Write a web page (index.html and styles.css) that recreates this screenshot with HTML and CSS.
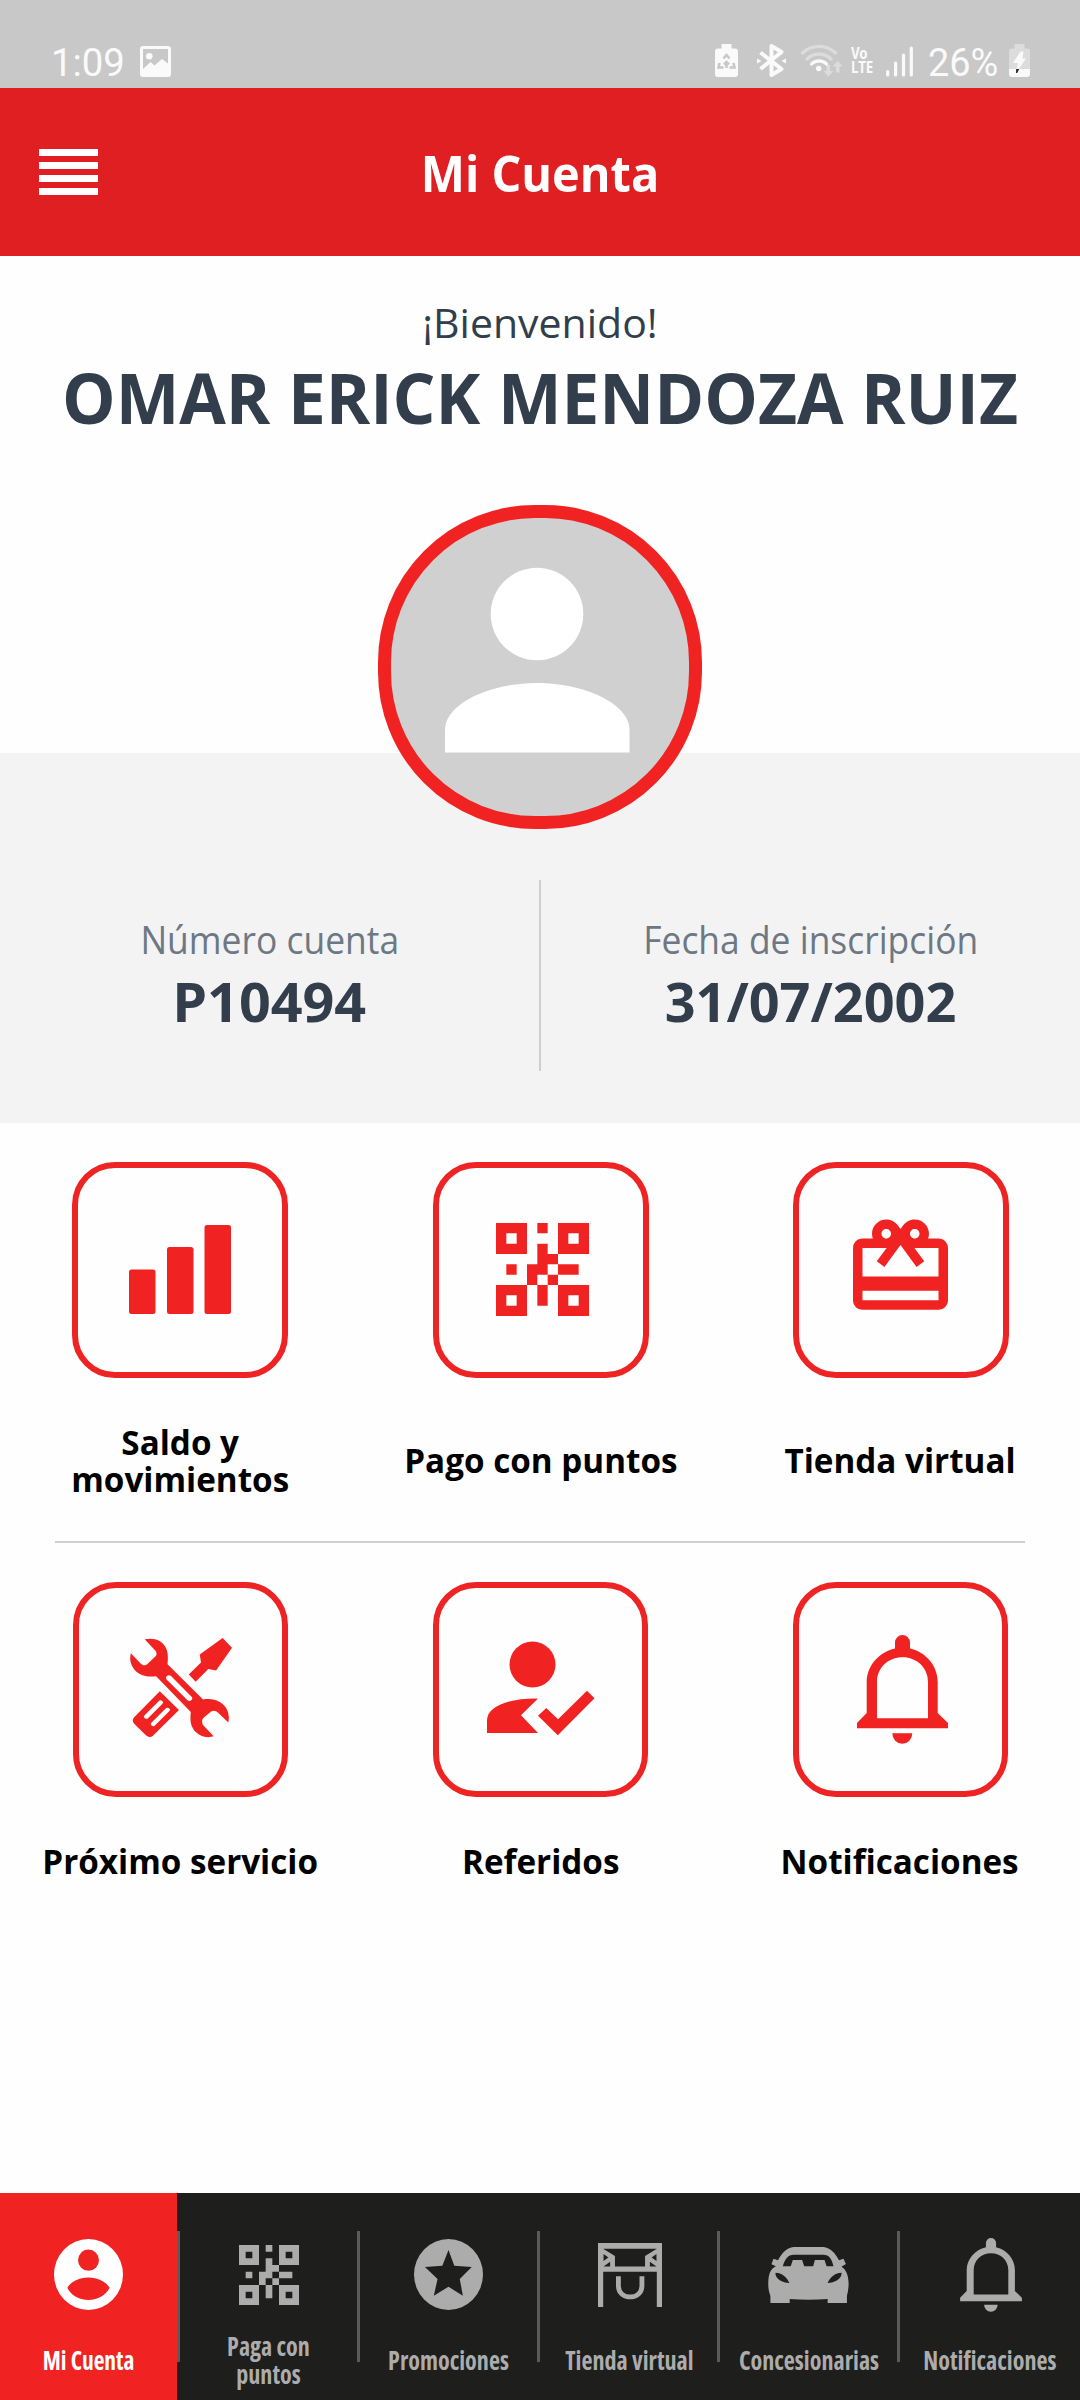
FILE: index.html
```html
<!DOCTYPE html>
<html lang="es">
<head>
<meta charset="utf-8">
<title>Mi Cuenta</title>
<link rel="stylesheet" href="styles.css">
</head>
<body>
<svg class="defs" aria-hidden="true">
  <symbol id="qr" viewBox="0 0 9 9" preserveAspectRatio="none">
    <path fill-rule="evenodd" d="M0 0h3v3H0zM1 1v1h1V1zM6 0h3v3H6zM7 1v1h1V1zM0 6h3v3H0zM1 7v1h1V7zM6 6h3v3H6zM7 7v1h1V7zM4 0h1v1H4zM4 2h1v1h1v1H5v1H4v1H3V4h1zM1 4h1v1H1zM6 4h2v1H6zM5 5h1v1H5zM4 6h1v2H4z"/>
  </symbol>
  <symbol id="bell" viewBox="0 0 91 109">
    <path fill-rule="evenodd" d="M38 13.5V7.5a7.5 7.5 0 0 1 15 0v6C69 17 80.7 31 80.7 47v31L91 88v5.3H0V88l9.7-10V47C9.7 31 22 17 38 13.5ZM45.5 22.3C31 22.3 20 33 20 47v36.3h51V47C71 33 60 22.3 45.5 22.3ZM35.3 98.3h20a10 10.5 0 0 1-20 0Z"/>
  </symbol>
</svg>

<div class="status">
  <span class="clock">1:09</span>
  <svg class="st-image" viewBox="0 0 31 31"><path fill-rule="evenodd" d="M3 0h25q3 0 3 3v25q0 3-3 3H3q-3 0-3-3V3q0-3 3-3zM3 3v20l7.500-7 4 3.500 7.500-6.500 6 4.500V3zM9.300 7a3.300 3.300 0 1 1 0 6.600 3.300 3.300 0 0 1 0-6.600z"/></svg>
  <div class="status-right">
    <svg class="st-recycle" viewBox="0 0 23 33"><path d="M6.500 0h10v4.500H20q3 0 3 3V30q0 3-3 3H3q-3 0-3-3V7.500q0-3 3-3h3.500z"/><path class="cut" d="M8.500 14.500l3-3.500 3 3.500M4.500 19l-1 4.500h5M18.500 19l1 4.500h-5M11.500 24v-5M9 20.500l2.500-2.500 2.500 2.500"/></svg>
    <svg class="st-bluetooth" viewBox="0 0 29 33"><path class="line" d="M3.500 8.500 24.500 25 14.500 31V2l10 6L3.500 25"/><path d="M0 14.500v5l4.500-2.500zM29 14.500v5L24.500 17z"/></svg>
    <svg class="st-wifi" viewBox="0 0 42 33"><path class="line faint" d="M1.500 9a24 24 0 0 1 33 0M6 15a17 17 0 0 1 24 0"/><path class="line" d="M10.500 20a10.500 10.500 0 0 1 15 0"/><circle cx="17.700" cy="24.500" r="2.700"/><path class="faint-fill" d="M25.500 21h3.500v6h3.500L27.300 32.500 22.500 27h3zM35 28.500v-6h-3.500L36.700 17l5 5.500h-3.200v6z"/></svg>
    <span class="volte"><span>Vo</span><span>LTE</span></span>
    <svg class="st-signal" viewBox="0 0 27 31"><path class="line" d="M1.700 25.500V29M9.600 17v12M17.500 9v20M25.300 2v27"/></svg>
    <span class="percent">26%</span>
    <svg class="st-battery" viewBox="0 0 21 33"><path class="faint-fill" d="M5.500 0h10v4.500H18q3 0 3 3V25H0V7.500q0-3 3-3h2.500z"/><path d="M0 25h21v5q0 3-3 3H3q-3 0-3-3z"/><path d="M11.500 7.500h3l-1 7h3.500L9 26l-1.500-1 1.500-6H4z"/><path class="bolt-tip" d="M7.200 25h3l-2 4H7z"/></svg>
  </div>
</div>

<header class="header">
  <svg class="menu" viewBox="0 0 59 46"><path d="M0 0h59v7H0zM0 13h59v7H0zM0 26h59v7H0zM0 39h59v7H0z"/></svg>
  <h1 class="title">Mi Cuenta</h1>
</header>

<section class="welcome">
  <p class="hello">¡Bienvenido!</p>
  <p class="name">OMAR ERICK MENDOZA RUIZ</p>
</section>

<section class="account">
  <div class="avatar"><svg viewBox="0 0 298 298"><circle cx="146" cy="96" r="46.300"/><path d="M54 234.500V212C54 185 100 165 146 165s92.500 20 92.500 47v22.500z"/></svg></div>
  <div class="fact">
    <span class="fact-label">Número cuenta</span>
    <span class="fact-value number">P10494</span>
  </div>
  <div class="fact">
    <span class="fact-label">Fecha de inscripción</span>
    <span class="fact-value">31/07/2002</span>
  </div>
</section>

<main class="menu-grid">
  <div class="row">
    <div class="tile">
      <div class="card"><svg class="i-bars" viewBox="0 0 102 89"><rect y="44.500" width="26.500" height="44.500" rx="2.500"/><rect x="38" y="22" width="26.500" height="67" rx="2.500"/><rect x="75.500" width="26.500" height="89" rx="2.500"/></svg></div>
      <p class="label">Saldo y<br>movimientos</p>
    </div>
    <div class="tile">
      <div class="card"><svg class="i-qr"><use href="#qr"/></svg></div>
      <p class="label">Pago con puntos</p>
    </div>
    <div class="tile">
      <div class="card"><svg class="i-gift" viewBox="2 2 20 19"><path d="M20 6h-2.180c.11-.31.18-.65.18-1 0-1.660-1.340-3-3-3-1.050 0-1.960.54-2.500 1.350l-.5.67-.5-.68C10.960 2.540 10.050 2 9 2 7.340 2 6 3.340 6 5c0 .35.07.69.18 1H4c-1.110 0-1.990.89-1.990 2L2 19c0 1.110.89 2 2 2h16c1.110 0 2-.89 2-2V8c0-1.110-.89-2-2-2zm-5-2c.55 0 1 .45 1 1s-.45 1-1 1-1-.45-1-1 .45-1 1-1zM9 4c.55 0 1 .45 1 1s-.45 1-1 1-1-.45-1-1 .45-1 1-1zm11 15H4v-2h16v2zm0-5H4V8h5.080L7 10.830 8.620 12 11 8.760l1-1.360 1 1.360L15.380 12 17 10.830 14.920 8H20v6z"/></svg></div>
      <p class="label">Tienda virtual</p>
    </div>
  </div>
  <div class="row second">
    <div class="tile">
      <div class="card"><svg class="i-tools" viewBox="245 326 250 301" preserveAspectRatio="none"><path fill-rule="evenodd" d="M281 330C300 324 325 330 334 358 339 374 338 390 337 405L424 511C450 505 475 518 484 545 488 558 488 570 486 580L461 551C456 545 450 543 444 547L426 565C421 571 420 578 424 588L450 622C430 630 405 618 396 590 392 575 393 562 394 549L309 441C285 445 262 438 250 410 244 395 245 385 247 372L271 403C277 411 285 409 289 403L307 382C311 378 311 371 308 365ZM334 450L386 513C392 519 400 512 397 504L345 440C339 434 331 442 334 450Z"/><path d="M472 326 495 355 456 424 437 419 406 458 389 436 419 400 416 376Z"/><path d="M318 486 365 543 303 618C297 626 290 626 284 619L257 586C250 577 250 570 257 562Z"/><path class="slot" d="M285 563 320 520M302 585 337 542"/></svg></div>
      <p class="label">Próximo servicio</p>
    </div>
    <div class="tile">
      <div class="card"><svg class="i-referral" viewBox="487 1641 108 95"><circle cx="532.500" cy="1664.500" r="23"/><path d="M487 1733v-12.500C487 1706 510 1698 538 1698.500L521 1715.300 538 1733zM546.300 1708 558 1719.300 587 1690.700 594.500 1698.300 557.800 1735.300 538 1715.700z"/></svg></div>
      <p class="label">Referidos</p>
    </div>
    <div class="tile">
      <div class="card"><svg class="i-bell"><use href="#bell"/></svg></div>
      <p class="label">Notificaciones</p>
    </div>
  </div>
</main>

<nav class="tabs">
  <a class="tab active">
    <span class="tab-icon"><svg class="t-round" viewBox="157 180 201 208" preserveAspectRatio="none"><path fill-rule="evenodd" d="M257.500 180a100.500 104 0 1 1 0 208 100.500 104 0 1 1 0-208zM257.500 211a30.500 31 0 1 0 0 62 30.500 31 0 1 0 0-62zM196 323C204 343 230 359 257.500 359 284 359 310 343 319 323 310 306 284 293 257.500 293 230 293 204 306 196 323z"/></svg></span>
    <span class="tab-label">Mi Cuenta</span>
  </a>
  <a class="tab">
    <span class="tab-icon"><svg class="t-qr"><use href="#qr"/></svg></span>
    <span class="tab-label">Paga con<br>puntos</span>
  </a>
  <a class="tab">
    <span class="tab-icon"><svg class="t-round" viewBox="1199 180 202 208" preserveAspectRatio="none"><path fill-rule="evenodd" d="M1300 180a101 104 0 1 1 0 208 101 104 0 1 1 0-208zM1300 212 1282 258 1231 262 1268 297 1257 346 1300 320 1342 346 1333 297 1368 262 1317 258z"/></svg></span>
    <span class="tab-label">Promociones</span>
  </a>
  <a class="tab">
    <span class="tab-icon"><svg class="t-store" viewBox="166 190 185 191" preserveAspectRatio="none"><path fill-rule="evenodd" d="M166 190H351V381H336V276H181V381H166ZM181 207 215 229V260H302V229L336 207ZM182 223V244L196 233ZM201 246V260H182ZM335 223V244L321 233ZM316 246V260H335Z"/><path class="arc" d="M225 289V318C225 362 293 362 293 318V289"/></svg></span>
    <span class="tab-label">Tienda virtual</span>
  </a>
  <a class="tab">
    <span class="tab-icon"><svg class="t-car" viewBox="660 198 235 168" preserveAspectRatio="none"><path fill-rule="evenodd" d="M683 256 670 250 676 233 689 238C700 218 712 200 735 198H820C843 200 855 218 866 238L879 233 886 249 873 257C885 264 894 280 894 310 893 330 890 340 889 345V366H833V354Q778 358 723 354V366H667V345C662 330 660 320 661 300 662 280 668 262 683 256ZM703 256H726L732 237H759L765 256H791L796 237H824L830 256H850C846 235 838 221 820 221H735C718 221 708 235 703 256ZM682 275C679 292 700 305 722 306 715 288 700 275 682 275ZM873 275C855 275 840 288 833 306 855 305 876 292 873 275Z"/></svg></span>
    <span class="tab-label">Concesionarias</span>
  </a>
  <a class="tab">
    <span class="tab-icon"><svg class="t-bell"><use href="#bell"/></svg></span>
    <span class="tab-label">Notificaciones</span>
  </a>
</nav>
</body>
</html>
```
FILE: styles.css
```css
* { box-sizing: border-box; margin: 0; padding: 0; }

body {
  width: 1080px;
  height: 2400px;
  display: flex;
  flex-direction: column;
  background: #fefefe;
  font-family: "Open Sans", "Noto Sans", sans-serif;
  overflow: hidden;
}

svg { display: block; fill: currentColor; flex: none; }
.defs { position: absolute; width: 0; height: 0; }

/* Status bar */
.status {
  height: 88px;
  display: flex;
  align-items: flex-start;
  padding: 44px 50px 0 51px;
  background: #c8c8c8;
  color: #fafafa;
  font-family: Roboto, sans-serif;
}
.clock, .percent { font-size: 39.5px; line-height: 38px; font-weight: 400; white-space: nowrap; transform-origin: 0 50%; }
.clock { width: 89px; transform: scaleX(.97); }
.st-image { width: 31px; height: 31px; margin-top: 2px; }
.status-right { display: flex; margin-left: auto; }
.line { fill: none; stroke: currentColor; stroke-width: 3.2; stroke-linecap: round; stroke-linejoin: round; }
.faint { opacity: .4; }
.faint-fill { opacity: .4; }
.cut { fill: none; stroke: #c8c8c8; stroke-width: 2.6; }
.bolt-tip { fill: #222; }
.st-recycle { width: 23px; height: 33px; margin-right: 19px; }
.st-bluetooth { width: 29px; height: 33px; margin-right: 15px; }
.st-bluetooth .line { stroke-width: 4; stroke-linecap: butt; }
.st-wifi { width: 42px; height: 33px; margin-right: 8px; }
.volte {
  width: 25px;
  display: flex;
  flex-direction: column;
  margin: 2px 10px 0 0;
  font-family: "Noto Sans", sans-serif;
  font-size: 16px;
  line-height: 14px;
  font-weight: 700;
  transform: scaleX(.83);
  transform-origin: 0 50%;
}
.st-signal { width: 27px; height: 31px; margin: 2px 15px 0 0; }
.percent { width: 81px; transform: scaleX(.96); }
.st-battery { width: 21px; height: 33px; }

/* Header */
.header {
  height: 168px;
  display: grid;
  grid-template-columns: 98px 1fr 98px;
  align-items: center;
  background: #e01f22;
  color: #fff;
}
.menu { width: 59px; height: 46px; margin-left: 39px; }
.title { padding-top: 2px; text-align: center; font-size: 50px; line-height: 60px; font-weight: 700; transform: scaleX(.937); }

/* Welcome */
.welcome { height: 497px; padding-top: 41px; text-align: center; color: #323e4b; white-space: nowrap; }
.hello { font-size: 41px; line-height: 50px; }
.name { font-size: 70px; line-height: 101px; font-weight: 700; transform: scaleX(.964); }

/* Account data */
.account {
  position: relative;
  height: 370px;
  display: grid;
  grid-template-columns: 541px 539px;
  padding-top: 127px;
  background: #f3f3f3;
}
.avatar {
  position: absolute;
  left: 378px;
  top: -248px;
  width: 324px;
  height: 324px;
  border: 13px solid #f12322;
  border-radius: 157px;
  background: #d0d0d0;
  color: #fff;
}
.fact {
  height: 191px;
  display: flex;
  flex-direction: column;
  align-items: center;
  padding-top: 34px;
  white-space: nowrap;
}
.fact:nth-child(2) { border-right: 2px solid #cfcfcf; }
.fact-label { font-size: 38px; line-height: 50px; color: #6d7884; transform: scaleX(.932); }
.fact-value { font-size: 54px; line-height: 74px; font-weight: 700; color: #323e4b; }
.number { transform: scaleX(1.03); }

/* Options */
.menu-grid { height: 1070px; padding-top: 39px; }
.row { display: grid; grid-template-columns: 360px 361px 359px; width: 1080px; }
.tile { display: flex; flex-direction: column; align-items: center; }
.card {
  width: 216px;
  height: 216px;
  display: flex;
  align-items: center;
  justify-content: center;
  border: 6px solid #ee2424;
  border-radius: 43px;
  color: #f12322;
}
.label {
  height: 163px;
  display: flex;
  align-items: center;
  text-align: center;
  font-size: 34.5px;
  line-height: 37px;
  font-weight: 700;
  color: #000;
  white-space: nowrap;
  transform: scaleX(.963);
}
.row:first-child::after {
  content: "";
  grid-column: 1 / -1;
  height: 2px;
  margin: 0 55px;
  background: #cfcfcf;
}
.second { grid-template-columns: 361px 359px 360px; margin-top: 39px; }
.second .card { width: 215px; height: 215px; }
.second .label { height: 127px; }
.i-bars { width: 102px; height: 89px; margin-bottom: 2px; }
.i-qr { width: 93px; height: 93px; margin: 0 0 1px 3px; }
.i-gift { width: 95px; height: 91px; margin-bottom: 12px; }
.i-tools { width: 102px; height: 100px; margin-bottom: 3px; }
.slot { fill: none; stroke: #fefefe; stroke-width: 12; stroke-linecap: round; }
.i-referral { width: 108px; height: 95px; margin-bottom: 2px; }
.i-bell { width: 91px; height: 109px; margin-left: 4px; }

/* Tab bar */
.tabs { height: 207px; display: grid; grid-template-columns: repeat(6, 180px); background: #1e1e1c; color: #acacac; }
.tab { display: grid; grid-template-columns: 177px 3px; grid-template-rows: 132px 75px; }
.tab::after {
  content: "";
  grid-column: 2;
  grid-row: 1 / 3;
  height: 131px;
  margin-top: 38px;
  background: #5b5b5a;
}
.tab:last-child::after { display: none; }
.tab-icon {
  grid-column: 1;
  display: flex;
  align-items: center;
  justify-content: center;
  padding-top: 31px;
}
.tab-label {
  grid-column: 1;
  display: flex;
  align-items: center;
  justify-content: center;
  padding-bottom: 4px;
  text-align: center;
  font-size: 26px;
  line-height: 27.5px;
  font-weight: 700;
  font-stretch: 75%;
  white-space: nowrap;
  transform: scaleX(.925);
}
.tab:nth-child(4) .tab-icon, .tab:nth-child(4) .tab-label { padding-left: 2px; }
.tab:nth-child(5) .tab-label { padding-left: 1px; }
.tab:nth-child(6) .tab-icon { padding-left: 4px; }
.tab:nth-child(6) .tab-label { padding-left: 3px; }
.active { color: #fff; background: linear-gradient(#f12322, #f12322) 0 0 / 177px 100% no-repeat; }
.active .tab-label { transform: scaleX(.9); }
.t-round { width: 69px; height: 71px; }
.t-qr { width: 60px; height: 60px; }
.t-store { width: 64px; height: 64px; }
.arc { fill: none; stroke: currentColor; stroke-width: 14; }
.t-car { width: 81px; height: 56px; }
.t-bell { width: 62px; height: 74px; }
```
